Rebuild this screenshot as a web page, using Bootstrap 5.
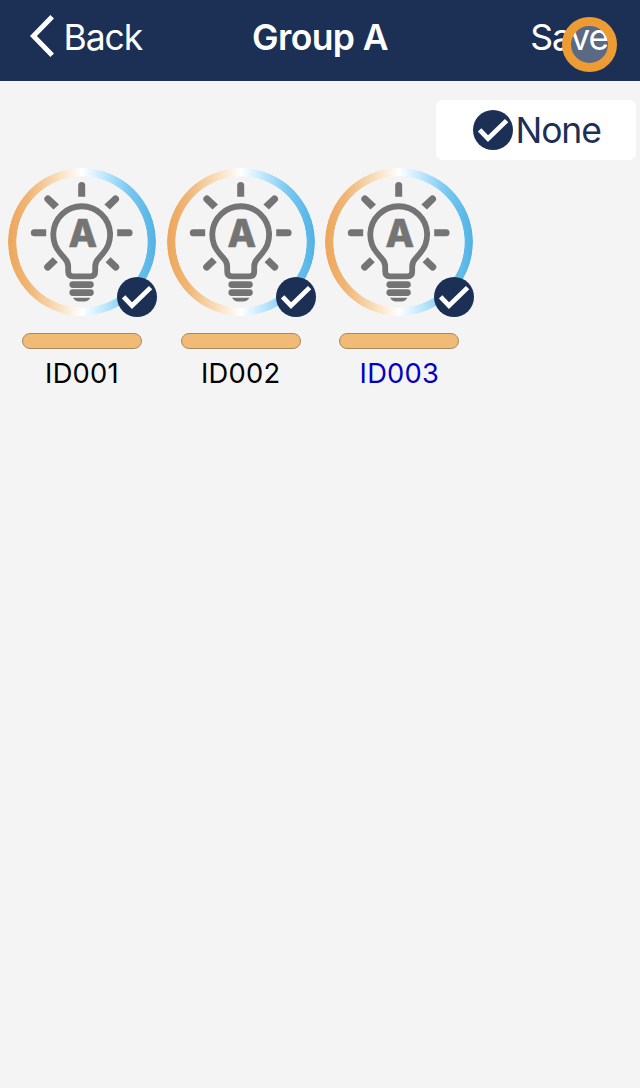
<!DOCTYPE html>
<html lang="en">
<head>
<meta charset="utf-8">
<meta name="viewport" content="width=device-width, initial-scale=1">
<title>Group A</title>
<link href="https://cdn.jsdelivr.net/npm/bootstrap@5.3.0/dist/css/bootstrap.min.css" rel="stylesheet">
<style>
body{background:#f4f4f4;font-family:Inter,"Liberation Sans",sans-serif;color:#000;min-height:1088px;overflow:hidden}
.topbar{background:#1c3056;height:81px;color:#fff;font-size:35.5px;line-height:44px;padding:15px 32px 0 30px}
.topbar .side{flex:1 1 0;letter-spacing:-1.1px}
.topbar span,.title,.save{padding-top:1px}
.back-arrow{width:24px;height:42px;margin:0 9.5px 3px 0}
.title{font-weight:600;letter-spacing:-.6px;padding-left:2px}
.tap{left:562px;top:17px;width:55px;height:55px;border:9px solid #ed9c33;background:rgba(255,255,255,.28)}
.none-btn{width:200px;height:60px;padding:0 0 0 37px;border-radius:7px;color:#1c3056;font-size:35.5px;letter-spacing:-1.1px;line-height:1}
.none-btn span{margin-left:2.5px;padding-top:2px}
.tick{width:40px;height:40px}
.lights{padding-left:7px;margin-top:7px;gap:8.7px}
.light{width:150px}
.lamp{width:150px;height:150px}
.lamp text{font:800 38.5px Inter,sans-serif}
.ring{inset:1px;border-radius:50%;background:linear-gradient(90deg,#eda65a 0%,#f0b677 14%,#f9dfbd 34%,#fff 50%,#c8ebff 63%,#78c8f1 82%,#52b2e4 100%);-webkit-mask:radial-gradient(circle,transparent 65.3px,#000 66px);mask:radial-gradient(circle,transparent 65.3px,#000 66px)}
.light .tick{left:110px;top:110px}
.level{width:120px;height:16px;border:1px solid #a8895f;background:#f1bb76;border-radius:8px;margin-top:16px}
.name{font-size:27.3px;line-height:34px;margin-top:8px;letter-spacing:.25px}
.current{color:#0500c4}
</style>
</head>
<body>
<svg width="0" height="0" class="position-absolute">
<defs>
<symbol id="tick" viewBox="0 0 40 40"><circle cx="20" cy="20" r="20" fill="#1c3056"/><path d="M6.6 19.8 15 28.6 33.6 10.6" fill="none" stroke="#fff" stroke-width="4.8"/></symbol>
<symbol id="bulb" viewBox="0 0 150 150">
<g fill="none" stroke="#747474" stroke-width="5.8" stroke-linejoin="round">
<path d="M66 109.3Q61.2 109.3 61.2 104.5V99.5Q61.2 95 57.8 91.5L53.2 86.2A28.4 28.4 0 1 1 96.2 86.2L91.6 91.5Q88.2 95 88.2 99.5V104.5Q88.2 109.3 83.4 109.3Z"/>
<path stroke-width="6.8" stroke-linecap="round" d="M65.8 117.6H83.4M65.8 125.6H83.4"/>
</g>
<path fill="#747474" d="M66 130.8H83.4Q81.5 134.4 77.5 134.4H72Q68 134.4 66 130.8Z"/>
<g fill="#747474">
<path d="M71.2 29.8V18.5A3.5 3.5 0 0 1 78.2 18.5V29.8Z"/>
<path d="M39.2 62.2V69.2H27.3A3.5 3.5 0 0 1 27.3 62.2Z"/>
<path d="M110.2 62.2V69.2H122.1A3.5 3.5 0 0 0 122.1 62.2Z"/>
<path d="M46.5 42.6 38.4 34.5A3.5 3.5 0 0 1 43.4 29.5L52 37.6Z"/>
<path d="M102.9 42.6 111 34.5A3.5 3.5 0 0 0 106 29.5L97.4 37.6Z"/>
<path d="M45.8 90.2 38.2 97.4A3.5 3.5 0 0 0 43.2 102.4L50.8 95.2Z"/>
<path d="M103.6 90.2 111.2 97.4A3.5 3.5 0 0 1 106.2 102.4L98.6 95.2Z"/>
</g>
</symbol>
</defs>
</svg>

<header class="topbar d-flex align-items-start position-relative">
<div class="side d-flex align-items-center"><svg class="back-arrow" viewBox="0 0 24 42"><path d="M22.2 1.8 3.4 21 22.2 40.2" fill="none" stroke="#fff" stroke-width="5"/></svg><span>Back</span></div>
<div class="title">Group A</div>
<div class="side save text-end">Save</div>
<div class="tap position-absolute rounded-circle"></div>
</header>

<main>
<div class="d-flex justify-content-end pe-1" style="padding-top:19px">
<button class="none-btn border-0 bg-white d-flex align-items-center"><svg class="tick"><use href="#tick"/></svg><span>None</span></button>
</div>
<div class="lights d-flex">
<div class="light d-flex flex-column align-items-center position-relative">
<div class="lamp position-relative"><div class="ring position-absolute"></div><svg class="lamp position-absolute start-0 top-0"><use href="#bulb"/><text x="61.5" y="80" textLength="28.6" lengthAdjust="spacingAndGlyphs" fill="#747474" stroke="#747474" stroke-width=".6">A</text></svg><svg class="tick position-absolute"><use href="#tick"/></svg></div>
<div class="level"></div><div class="name">ID001</div>
</div>
<div class="light d-flex flex-column align-items-center position-relative">
<div class="lamp position-relative"><div class="ring position-absolute"></div><svg class="lamp position-absolute start-0 top-0"><use href="#bulb"/><text x="61.5" y="80" textLength="28.6" lengthAdjust="spacingAndGlyphs" fill="#747474" stroke="#747474" stroke-width=".6">A</text></svg><svg class="tick position-absolute"><use href="#tick"/></svg></div>
<div class="level"></div><div class="name">ID002</div>
</div>
<div class="light d-flex flex-column align-items-center position-relative">
<div class="lamp position-relative"><div class="ring position-absolute"></div><svg class="lamp position-absolute start-0 top-0"><use href="#bulb"/><text x="61.5" y="80" textLength="28.6" lengthAdjust="spacingAndGlyphs" fill="#747474" stroke="#747474" stroke-width=".6">A</text></svg><svg class="tick position-absolute"><use href="#tick"/></svg></div>
<div class="level"></div><div class="name current">ID003</div>
</div>
</div>
</main>
<script src="https://cdn.jsdelivr.net/npm/bootstrap@5.3.0/dist/js/bootstrap.bundle.min.js"></script>
</body>
</html>
